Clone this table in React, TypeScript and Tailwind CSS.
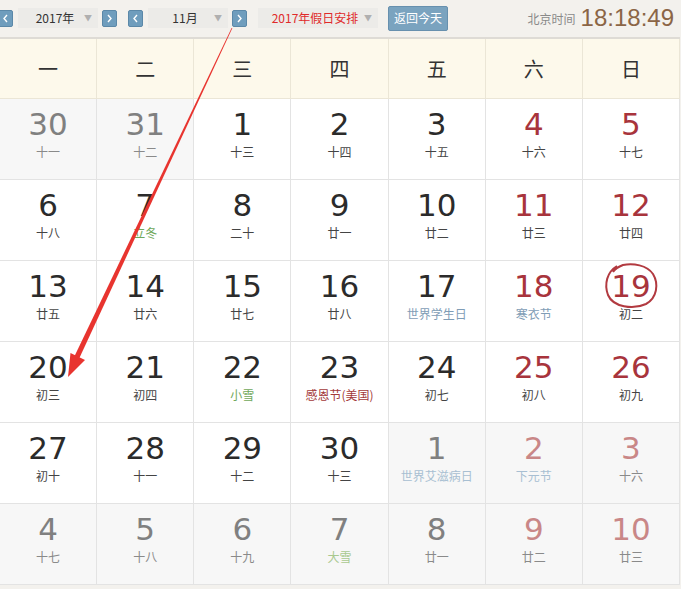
import React from "react";

type Kind = "normal" | "term" | "fest" | "holiday";

interface Day {
  n: number;
  sub: string;
  other?: boolean;
  kind?: Kind;
}

const WEEK = ["一", "二", "三", "四", "五", "六", "日"];

const ROWS: Day[][] = [
  [
    { n: 30, sub: "十一", other: true },
    { n: 31, sub: "十二", other: true },
    { n: 1, sub: "十三" },
    { n: 2, sub: "十四" },
    { n: 3, sub: "十五" },
    { n: 4, sub: "十六" },
    { n: 5, sub: "十七" },
  ],
  [
    { n: 6, sub: "十八" },
    { n: 7, sub: "立冬", kind: "term" },
    { n: 8, sub: "二十" },
    { n: 9, sub: "廿一" },
    { n: 10, sub: "廿二" },
    { n: 11, sub: "廿三" },
    { n: 12, sub: "廿四" },
  ],
  [
    { n: 13, sub: "廿五" },
    { n: 14, sub: "廿六" },
    { n: 15, sub: "廿七" },
    { n: 16, sub: "廿八" },
    { n: 17, sub: "世界学生日", kind: "fest" },
    { n: 18, sub: "寒衣节", kind: "fest" },
    { n: 19, sub: "初二" },
  ],
  [
    { n: 20, sub: "初三" },
    { n: 21, sub: "初四" },
    { n: 22, sub: "小雪", kind: "term" },
    { n: 23, sub: "感恩节(美国)", kind: "holiday" },
    { n: 24, sub: "初七" },
    { n: 25, sub: "初八" },
    { n: 26, sub: "初九" },
  ],
  [
    { n: 27, sub: "初十" },
    { n: 28, sub: "十一" },
    { n: 29, sub: "十二" },
    { n: 30, sub: "十三" },
    { n: 1, sub: "世界艾滋病日", other: true, kind: "fest" },
    { n: 2, sub: "下元节", other: true, kind: "fest" },
    { n: 3, sub: "十六", other: true },
  ],
  [
    { n: 4, sub: "十七", other: true },
    { n: 5, sub: "十八", other: true },
    { n: 6, sub: "十九", other: true },
    { n: 7, sub: "大雪", other: true, kind: "term" },
    { n: 8, sub: "廿一", other: true },
    { n: 9, sub: "廿二", other: true },
    { n: 10, sub: "廿三", other: true },
  ],
];

const cjk = { fontFamily: '"Noto Sans CJK SC", "Liberation Sans", sans-serif' };
const num = { fontFamily: '"DejaVu Sans", "Liberation Sans", sans-serif' };

const NavBtn = ({ dir }: { dir: "l" | "r" }) => (
  <button className="w-[15px] h-[17px] rounded-[2px] bg-[#6f9dbd] border border-[#5b88a8] flex items-center justify-center">
    <svg width="7" height="9" viewBox="0 0 7 9">
      <path
        d={dir === "l" ? "M5 1 L2 4.5 L5 8" : "M2 1 L5 4.5 L2 8"}
        stroke="#fff"
        strokeWidth="1.4"
        fill="none"
      />
    </svg>
  </button>
);

const Select = ({ label, w, red }: { label: string; w: string; red?: boolean }) => (
  <div
    className={`${w} h-[20px] bg-[#ecebe8] flex items-center justify-between pl-2 pr-[6px] text-[12px] ${
      red ? "text-[#e02a2a]" : "text-[#333]"
    }`}
    style={cjk}
  >
    <span className="flex-1 text-center">{label}</span>
    <span className="text-[#b0b0b0] text-[8px]">▼</span>
  </div>
);

const Cell = ({ d, col }: { d: Day; col: number }) => {
  const weekend = col >= 5;
  let numColor = "text-[#2b2b2b]";
  if (d.other) numColor = weekend ? "text-[#c98787]" : "text-[#808080]";
  else if (weekend) numColor = "text-[#a8343c]";

  let subColor = d.other ? "text-[#8a8a8a]" : "text-[#444]";
  if (d.kind === "term") subColor = d.other ? "text-[#a9c98f]" : "text-[#6fa85a]";
  if (d.kind === "fest") subColor = d.other ? "text-[#a8bfd2]" : "text-[#7f9db6]";
  if (d.kind === "holiday") subColor = "text-[#a33a3a]";

  const today = d.n === 19 && !d.other;

  return (
    <div
      className={`relative h-[81px] border-r border-b border-[#e3e3e3] flex flex-col items-center pt-[8px] ${
        d.other ? "bg-[#f7f7f7]" : "bg-white"
      }`}
    >
      <div className={`text-[31px] leading-[34px] ${numColor}`} style={num}>
        {d.n}
      </div>
      <div className={`mt-[3px] text-[12px] leading-[16px] ${subColor}`} style={cjk}>
        {d.sub}
      </div>
      {today && (
        <svg className="absolute left-[20px] top-[1px]" width="58" height="50" viewBox="0 0 58 50">
          <path
            d="M14 4 C4 10 1 22 5 33 C10 45 30 48 43 42 C54 36 56 22 50 12 C44 3 30 1 20 3 C15 5 12 7 10 10"
            stroke="#b23a40"
            strokeWidth="2"
            fill="none"
          />
        </svg>
      )}
    </div>
  );
};

export default function App() {
  return (
    <div className="relative w-[681px] h-[589px] bg-[#f3f1ed] overflow-hidden">
      {/* toolbar */}
      <div className="h-[36px] flex items-center" style={cjk}>
        <div className="-ml-[2px]">
          <NavBtn dir="l" />
        </div>
        <div className="ml-[5px]">
          <Select label="2017年" w="w-[80px]" />
        </div>
        <div className="ml-[4px]">
          <NavBtn dir="r" />
        </div>
        <div className="ml-[11px]">
          <NavBtn dir="l" />
        </div>
        <div className="ml-[5px]">
          <Select label="11月" w="w-[80px]" />
        </div>
        <div className="ml-[4px]">
          <NavBtn dir="r" />
        </div>
        <div className="ml-[11px]">
          <Select label="2017年假日安排" w="w-[120px]" red />
        </div>
        <button className="ml-[10px] h-[25px] w-[60px] rounded-[2px] bg-[#7aa3bf] border border-[#6790ae] text-white text-[12px]">
          返回今天
        </button>
        <div className="ml-auto mr-[7px] flex items-end gap-[5px]">
          <span className="text-[12px] text-[#8a8a8a] mb-[4px]">北京时间</span>
          <span
            className="text-[24px] leading-[28px] text-[#8b6546]"
            style={{ fontFamily: '"Liberation Sans", Arial, sans-serif' }}
          >
            18:18:49
          </span>
        </div>
      </div>

      {/* calendar */}
      <div className="mt-[1px] w-[680px] border-t-2 border-[#dedbd5] bg-white">
        <div className="grid grid-cols-7 bg-[#fdf9eb]">
          {WEEK.map((w) => (
            <div
              key={w}
              className="h-[60px] flex items-center justify-center border-r border-b border-[#ebe6d6] text-[20px] text-[#333]"
              style={cjk}
            >
              {w}
            </div>
          ))}
        </div>
        <div className="grid grid-cols-7">
          {ROWS.map((row, ri) =>
            row.map((d, ci) => <Cell key={`${ri}-${ci}`} d={d} col={ci} />)
          )}
        </div>
      </div>

      {/* red arrow annotation */}
      <svg className="absolute inset-0 pointer-events-none" width="681" height="589">
        <polygon points="232.4,28 231.6,28 74.6,356 79.4,358" fill="#e8342f" />
        <polygon points="68,377 70.5,353 85,360" fill="#e8342f" />
      </svg>
    </div>
  );
}
